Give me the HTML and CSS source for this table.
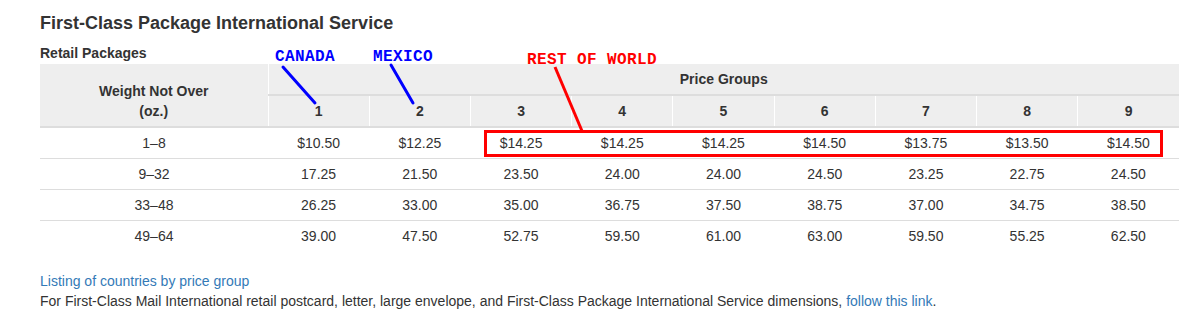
FILE: index.html
```html
<!DOCTYPE html>
<html>
<head>
    <title>First-Class Package International Service</title>
    <link rel="stylesheet" href="styles.css">
</head>
<body>

    <div class="page">
        <h2 class="title">First-Class Package International Service</h2>
        <h3 class="subtitle">Retail Packages</h3>

        <table class="rates">
            <colgroup>
                <col class="col-weight">
                <col span="9">
            </colgroup>
            <thead>
                <tr>
                    <th class="weight" rowspan="2">Weight Not Over<br>(oz.)</th>
                    <th colspan="9">Price Groups</th>
                </tr>
                <tr class="group">
                    <th>1</th><th>2</th><th>3</th><th>4</th><th>5</th><th>6</th><th>7</th><th>8</th><th>9</th>
                </tr>
            </thead>
            <tbody>
                <tr>
                    <td>1&ndash;8</td>
                    <td>$10.50</td><td>$12.25</td><td>$14.25</td><td>$14.25</td><td>$14.25</td><td>$14.50</td><td>$13.75</td><td>$13.50</td><td>$14.50</td>
                </tr>
                <tr>
                    <td>9&ndash;32</td>
                    <td>17.25</td><td>21.50</td><td>23.50</td><td>24.00</td><td>24.00</td><td>24.50</td><td>23.25</td><td>22.75</td><td>24.50</td>
                </tr>
                <tr>
                    <td>33&ndash;48</td>
                    <td>26.25</td><td>33.00</td><td>35.00</td><td>36.75</td><td>37.50</td><td>38.75</td><td>37.00</td><td>34.75</td><td>38.50</td>
                </tr>
                <tr>
                    <td>49&ndash;64</td>
                    <td>39.00</td><td>47.50</td><td>52.75</td><td>59.50</td><td>61.00</td><td>63.00</td><td>59.50</td><td>55.25</td><td>62.50</td>
                </tr>
            </tbody>
        </table>

        <div class="notes">
            <a href="#">Listing of countries by price group</a><br>
            For First-Class Mail International retail postcard, letter, large envelope, and First-Class Package International Service dimensions, <a href="#">follow this link</a>.
        </div>

        <!-- hand-drawn markup over the table -->
        <svg class="marks" width="1197" height="320" viewBox="0 0 1197 320">
            <text class="mark-blue" x="275" y="61">CANADA</text>
            <text class="mark-blue" x="373" y="61">MEXICO</text>
            <text class="mark-red" x="527" y="64">REST OF WORLD</text>
            <line class="line-blue" x1="283" y1="67" x2="315" y2="103" />
            <line class="line-blue" x1="391" y1="65" x2="413" y2="103" />
            <line class="line-red" x1="555" y1="67" x2="582" y2="131" />
            <rect class="box-red" x="485.5" y="131.5" width="676" height="24" />
        </svg>
    </div>

</body>
</html>
```

FILE: styles.css
```css
html, body {
    height: 100%; width: 100%;
}
body {
    margin: 0;
    background: #FFF;
    color: #333;
    font-family: "Liberation Sans", Arial, sans-serif;
    font-size: 14px;
    line-height: 20px;
}
.page {
    position: relative;
    padding: 13px 0 0 40px;
}
.title {
    margin: 0 0 10px;
    font-size: 18px;
    line-height: 20px;
    font-weight: bold;
}
.subtitle {
    margin: 0 0 1px;
    font-size: 14px;
    line-height: 20px;
    font-weight: bold;
}

.rates {
    border-collapse: collapse;
    table-layout: fixed;
    width: 1139px;
}
.rates .col-weight {width: 228px;}
.rates th, .rates td {
    padding: 5px 8px;
    line-height: 20px;
    text-align: center;
}
.rates thead th {
    background: #EEE;
    font-weight: bold;
    vertical-align: bottom;
    border-bottom: 2px solid #DDD;
}
.rates .weight {border-right: 1px solid #FFF;}
.rates .group th + th {border-left: 1px solid #FFF;}
.rates td {border-top: 1px solid #DDD;}

.notes {
    margin-top: 20px;
}
.notes a {
    color: #337AB7;
    text-decoration: none;
}

.marks {
    position: absolute;
    top: 0; left: 0;
    pointer-events: none;
}
.mark-blue, .mark-red {
    font-family: "Liberation Mono", "Courier New", monospace;
    font-size: 16px;
    font-weight: bold;
    letter-spacing: 0.4px;
}
.mark-blue {fill: #0000FF;}
.mark-red {fill: #FF0000;}
.line-blue {
    stroke: #0000FF;
    stroke-width: 3;
    stroke-linecap: round;
}
.line-red {
    stroke: #FF0000;
    stroke-width: 3;
}
.box-red {
    fill: none;
    stroke: #FF0000;
    stroke-width: 3;
}
```
